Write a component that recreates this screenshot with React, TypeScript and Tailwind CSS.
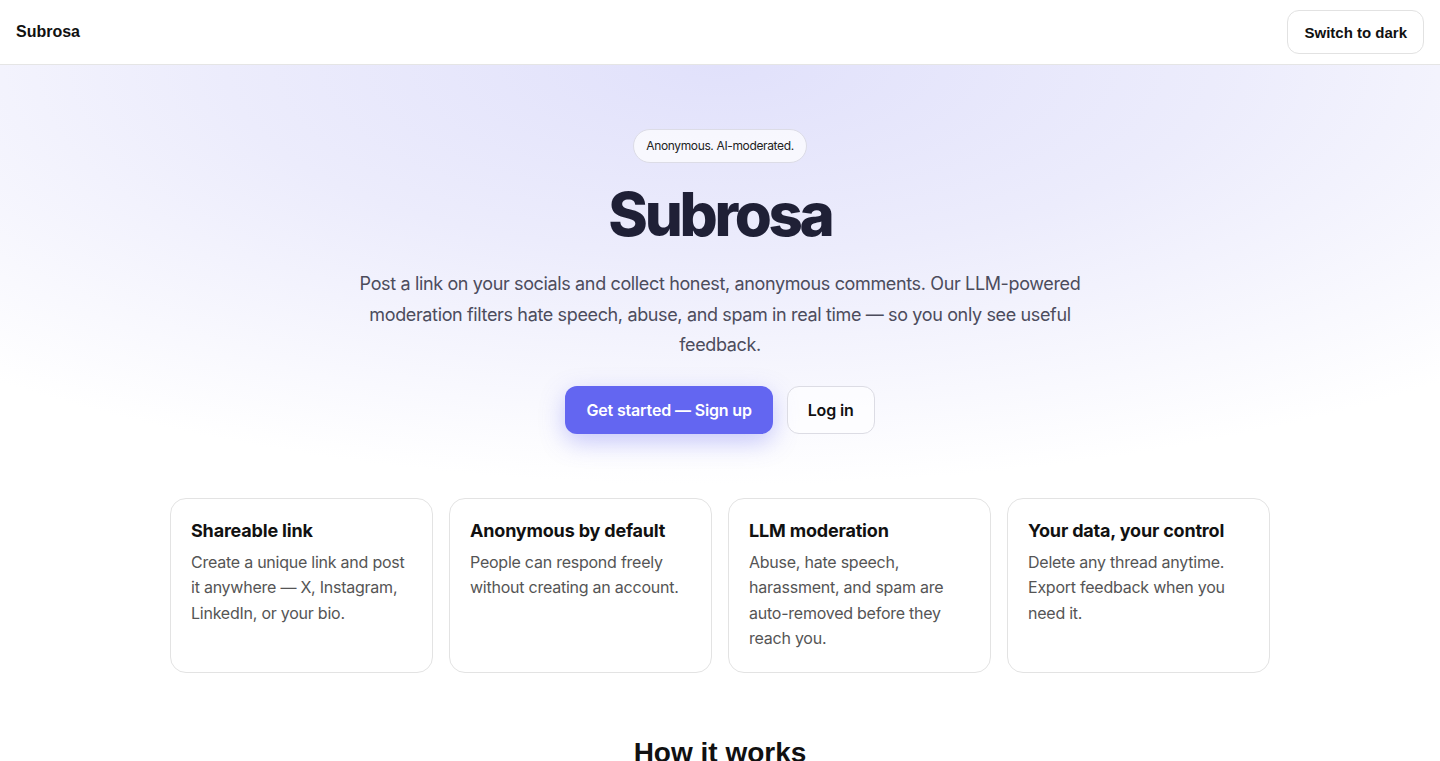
import React from 'react';

const features = [
  {
    title: 'Shareable link',
    body: 'Create a unique link and post it anywhere — X, Instagram, LinkedIn, or your bio.',
  },
  {
    title: 'Anonymous by default',
    body: 'People can respond freely without creating an account.',
  },
  {
    title: 'LLM moderation',
    body: 'Abuse, hate speech, harassment, and spam are auto-removed before they reach you.',
  },
  {
    title: 'Your data, your control',
    body: 'Delete any thread anytime. Export feedback when you need it.',
  },
];

export default function App() {
  return (
    <div className="min-h-screen bg-white text-[#111] font-['Inter',sans-serif]">
      {/* Top bar */}
      <header className="h-[65px] border-b border-[#e5e5e5] bg-white px-4 flex items-center justify-between">
        <div className="font-['Liberation_Sans',Arial,sans-serif] font-bold text-base text-[#111]">Subrosa</div>
        <button className="h-[44px] px-4 pt-[2px] rounded-xl border border-[#e2e2e2] bg-white font-['Liberation_Sans',Arial,sans-serif] font-bold text-[15px] text-[#111]">
          Switch to dark
        </button>
      </header>

      {/* Hero */}
      <section className="bg-[radial-gradient(ellipse_1100px_420px_at_50%_0%,#e1e1fb_0%,#ececfc_45%,#ffffff_100%)] pt-16 pb-16 flex flex-col items-center text-center">
        <div className="px-3 py-[7px] rounded-full border border-[#dcdce6] bg-white/70 text-xs text-[#222] leading-[18px] tracking-[-0.03em]">
          Anonymous. AI-moderated.
        </div>
        <h1 className="mt-[15px] text-[60px] leading-[72px] font-extrabold tracking-[-0.055em] text-[#1f2036]">Subrosa</h1>
        <p className="mt-[19px] max-w-[740px] text-lg leading-[30.5px] text-[#4c4c5c] tracking-[-0.02em]">
          Post a link on your socials and collect honest, anonymous comments. Our LLM-powered moderation filters hate
          speech, abuse, and spam in real time — so you only see useful feedback.
        </p>
        <div className="mt-[25px] flex items-center gap-[14px]">
          <button className="h-[48px] px-[21px] rounded-xl bg-[#6366f1] text-white font-semibold text-base tracking-[-0.01em] shadow-[0_8px_24px_rgba(99,102,241,0.35)]">
            Get started — Sign up
          </button>
          <button className="h-[48px] px-[20px] rounded-xl border border-[#dcdce4] bg-white/60 text-[#111] font-semibold text-base tracking-[-0.01em]">
            Log in
          </button>
        </div>
      </section>

      {/* Features */}
      <section className="max-w-[1100px] mx-auto grid grid-cols-4 gap-4">
        {features.map((f) => (
          <div key={f.title} className="h-[175px] rounded-2xl border border-[#e3e3e3] bg-white px-5 pt-[20px]">
            <h3 className="text-lg font-bold leading-[24px] tracking-[-0.01em] text-[#111]">{f.title}</h3>
            <p className="mt-[7px] text-base leading-[25.5px] tracking-[-0.015em] text-[#555]">{f.body}</p>
          </div>
        ))}
      </section>

      {/* How it works */}
      <section className="pt-[64px] pb-16 text-center">
        <h2 className="font-['Liberation_Sans',Arial,sans-serif] font-bold text-[28px] leading-[32px] text-[#111]">How it works</h2>
      </section>
    </div>
  );
}
